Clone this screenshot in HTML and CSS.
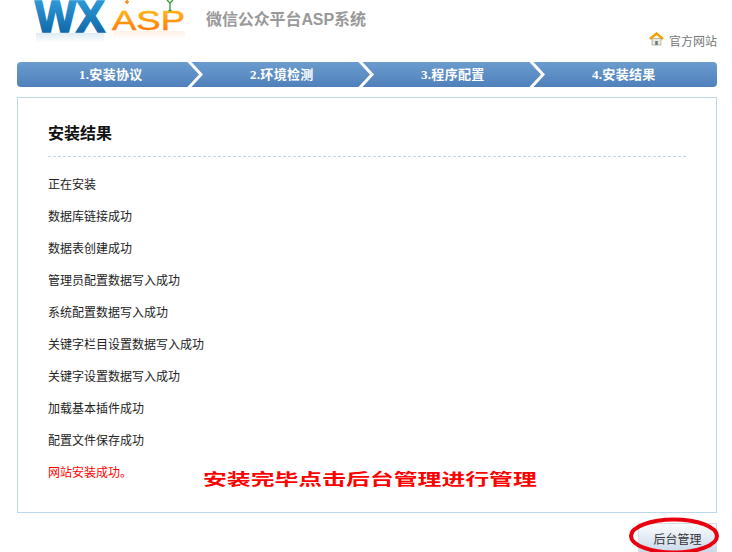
FILE: index.html
```html
<!DOCTYPE html>
<html lang="zh-CN">
<head>
<meta charset="utf-8">
<title>安装结果</title>
<link rel="stylesheet" href="styles.css">
</head>
<body>
<div class="page">
  <header class="header">
    <svg class="logo" width="155" height="62" viewBox="0 0 155 62">
      <defs>
        <linearGradient id="blue" x1="0" y1="0" x2="0" y2="1">
          <stop offset="0" stop-color="#35a6e2"/><stop offset="1" stop-color="#0a5b9e"/>
        </linearGradient>
        <linearGradient id="orange" x1="0" y1="0" x2="0" y2="1">
          <stop offset="0" stop-color="#ffc21a"/><stop offset="1" stop-color="#ff6c00"/>
        </linearGradient>
        <linearGradient id="blueFade" x1="0" y1="0" x2="0" y2="1">
          <stop offset="0" stop-color="#8fbbdc" stop-opacity=".3"/><stop offset="1" stop-color="#8fbbdc" stop-opacity="0"/>
        </linearGradient>
        <linearGradient id="orangeFade" x1="0" y1="0" x2="0" y2="1">
          <stop offset="0" stop-color="#ffc090" stop-opacity=".22"/><stop offset="1" stop-color="#ffc090" stop-opacity="0"/>
        </linearGradient>
      </defs>
      <rect x="2" y="33" width="68" height="10" fill="url(#blueFade)"/>
      <rect x="79" y="31" width="72" height="9" fill="url(#orangeFade)"/>
      <text class="logo-wx" x="1" y="32" textLength="70" lengthAdjust="spacingAndGlyphs" fill="url(#blue)" stroke="url(#blue)">WX</text>
      <text class="logo-asp" x="78" y="30" textLength="73" lengthAdjust="spacingAndGlyphs" fill="url(#orange)" stroke="url(#orange)">ASP</text>
      <path d="M93 0v4M91 2h4" stroke="#ff8a10" stroke-width="1.6" fill="none"/>
      <path d="M133 0l3 3 3-3M136 3v7M134.500 10.500h3" stroke="#3aa23a" stroke-width="1.4" fill="none"/>
    </svg>
    <h1 class="site-title">微信公众平台ASP系统</h1>
    <a class="home-link" href="#">
      <svg class="home-icon" width="15" height="14" viewBox="0 0 15 14">
        <path d="M3 6.500h9V13H3z" fill="#e8e8e4" stroke="#a8a8a0" stroke-width=".8"/>
        <path d="M6.200 9h2.600v4H6.200z" fill="#777"/>
        <path d="M1 7l6.500-5.500L14 7" fill="none" stroke="#f5a000" stroke-width="2.400"/>
      </svg>
      <span>官方网站</span>
    </a>
  </header>

  <nav class="steps">
    <div class="step">1.安装协议
      <svg class="chevron" width="17" height="25" viewBox="0 0 17 25"><path d="M1.500 -1L14 12.500 1.500 26" fill="none" stroke="#fff" stroke-width="3"/></svg>
    </div>
    <div class="step">2.环境检测
      <svg class="chevron" width="17" height="25" viewBox="0 0 17 25"><path d="M1.500 -1L14 12.500 1.500 26" fill="none" stroke="#fff" stroke-width="3"/></svg>
    </div>
    <div class="step">3.程序配置
      <svg class="chevron" width="17" height="25" viewBox="0 0 17 25"><path d="M1.500 -1L14 12.500 1.500 26" fill="none" stroke="#fff" stroke-width="3"/></svg>
    </div>
    <div class="step step-last">4.安装结果</div>
  </nav>

  <main class="panel">
    <h2 class="panel-title">安装结果</h2>
    <ul class="log">
      <li>正在安装</li>
      <li>数据库链接成功</li>
      <li>数据表创建成功</li>
      <li>管理员配置数据写入成功</li>
      <li>系统配置数据写入成功</li>
      <li>关键字栏目设置数据写入成功</li>
      <li>关键字设置数据写入成功</li>
      <li>加载基本插件成功</li>
      <li>配置文件保存成功</li>
      <li class="log-ok">网站安装成功。</li>
    </ul>
    <div class="note">安装完毕点击后台管理进行管理</div>
  </main>

  <div class="actions">
    <a class="btn" href="#">后台管理</a>
    <svg class="ring" width="92" height="40" viewBox="0 0 92 40"><ellipse cx="46" cy="19" rx="43" ry="16.500" fill="none" stroke="#e8000f" stroke-width="4"/></svg>
  </div>
</div>
</body>
</html>
```
FILE: styles.css
```css
* { box-sizing: border-box; }
html, body { margin: 0; height: 552px; overflow: hidden; background: #fff; }
body { font-family: "Noto Sans CJK SC", "Liberation Sans", sans-serif; font-size: 12px; color: #222; }
.page { padding: 0 15px 0 17px; height: 552px; overflow: hidden; }
.header { display: flex; height: 62px; align-items: flex-start; }
.logo { margin-left: 17px; flex: none; display: block; }
.logo-wx { font-family: "Liberation Sans", sans-serif; font-weight: 700; font-size: 44px; stroke-width: 1.6; }
.logo-asp { font-family: "Liberation Sans", sans-serif; font-weight: 400; font-size: 27px; stroke-width: .5; }
.site-title { margin: 9px 0 0 17px; font-family: "Liberation Sans", "Noto Sans CJK SC", sans-serif; font-size: 16px; letter-spacing: -.1px; line-height: 22px; font-weight: 700; color: #999; }
.home-link { margin: 32px 0 0 auto; display: flex; align-items: flex-start; gap: 5px; color: #777; text-decoration: none; line-height: 17px; }
.home-icon { display: block; flex: none; margin-top: 0; }

.steps { display: flex; height: 25px; border-radius: 4px; background: linear-gradient(#6a9cce, #5080bb); }
.step { position: relative; flex: 0 0 171px; padding-left: 62px; font-family: "Liberation Serif", "Noto Sans CJK SC", serif; font-size: 13px; letter-spacing: .3px; font-weight: 700; line-height: 25px; color: #fff; white-space: nowrap; }
.step-last { flex: 1 1 auto; }
.chevron { position: absolute; right: -16px; top: 0; }

.panel { position: relative; margin-top: 10px; height: 416px; border: 1px solid #bcd8ef; padding: 0 30px; }
.panel-title { margin: 0; height: 59px; padding-top: 22px; border-bottom: 1px dashed #bcd8e6; font-size: 16px; line-height: 24px; font-weight: 700; color: #111; }
.log { list-style: none; margin: 11px 0 0; padding: 0; }
.log li { height: 32px; line-height: 32px; }
.log .log-ok { color: #f00; }
.note { position: absolute; left: 185px; top: 369px; font-size: 16px; line-height: 22px; font-weight: 700; color: #f00; white-space: nowrap; transform: scaleX(1.49); transform-origin: left center; }

.actions { position: relative; margin-top: 10px; display: flex; justify-content: flex-end; }
.btn { display: block; width: 79px; height: 34px; padding-top: 6px; text-align: center; line-height: 18px; color: #333; text-decoration: none; border: 1px solid #d4dde8; background: linear-gradient(#fafcfe, #c3d4e8); }
.ring { position: absolute; right: -3px; top: -6px; }
```
